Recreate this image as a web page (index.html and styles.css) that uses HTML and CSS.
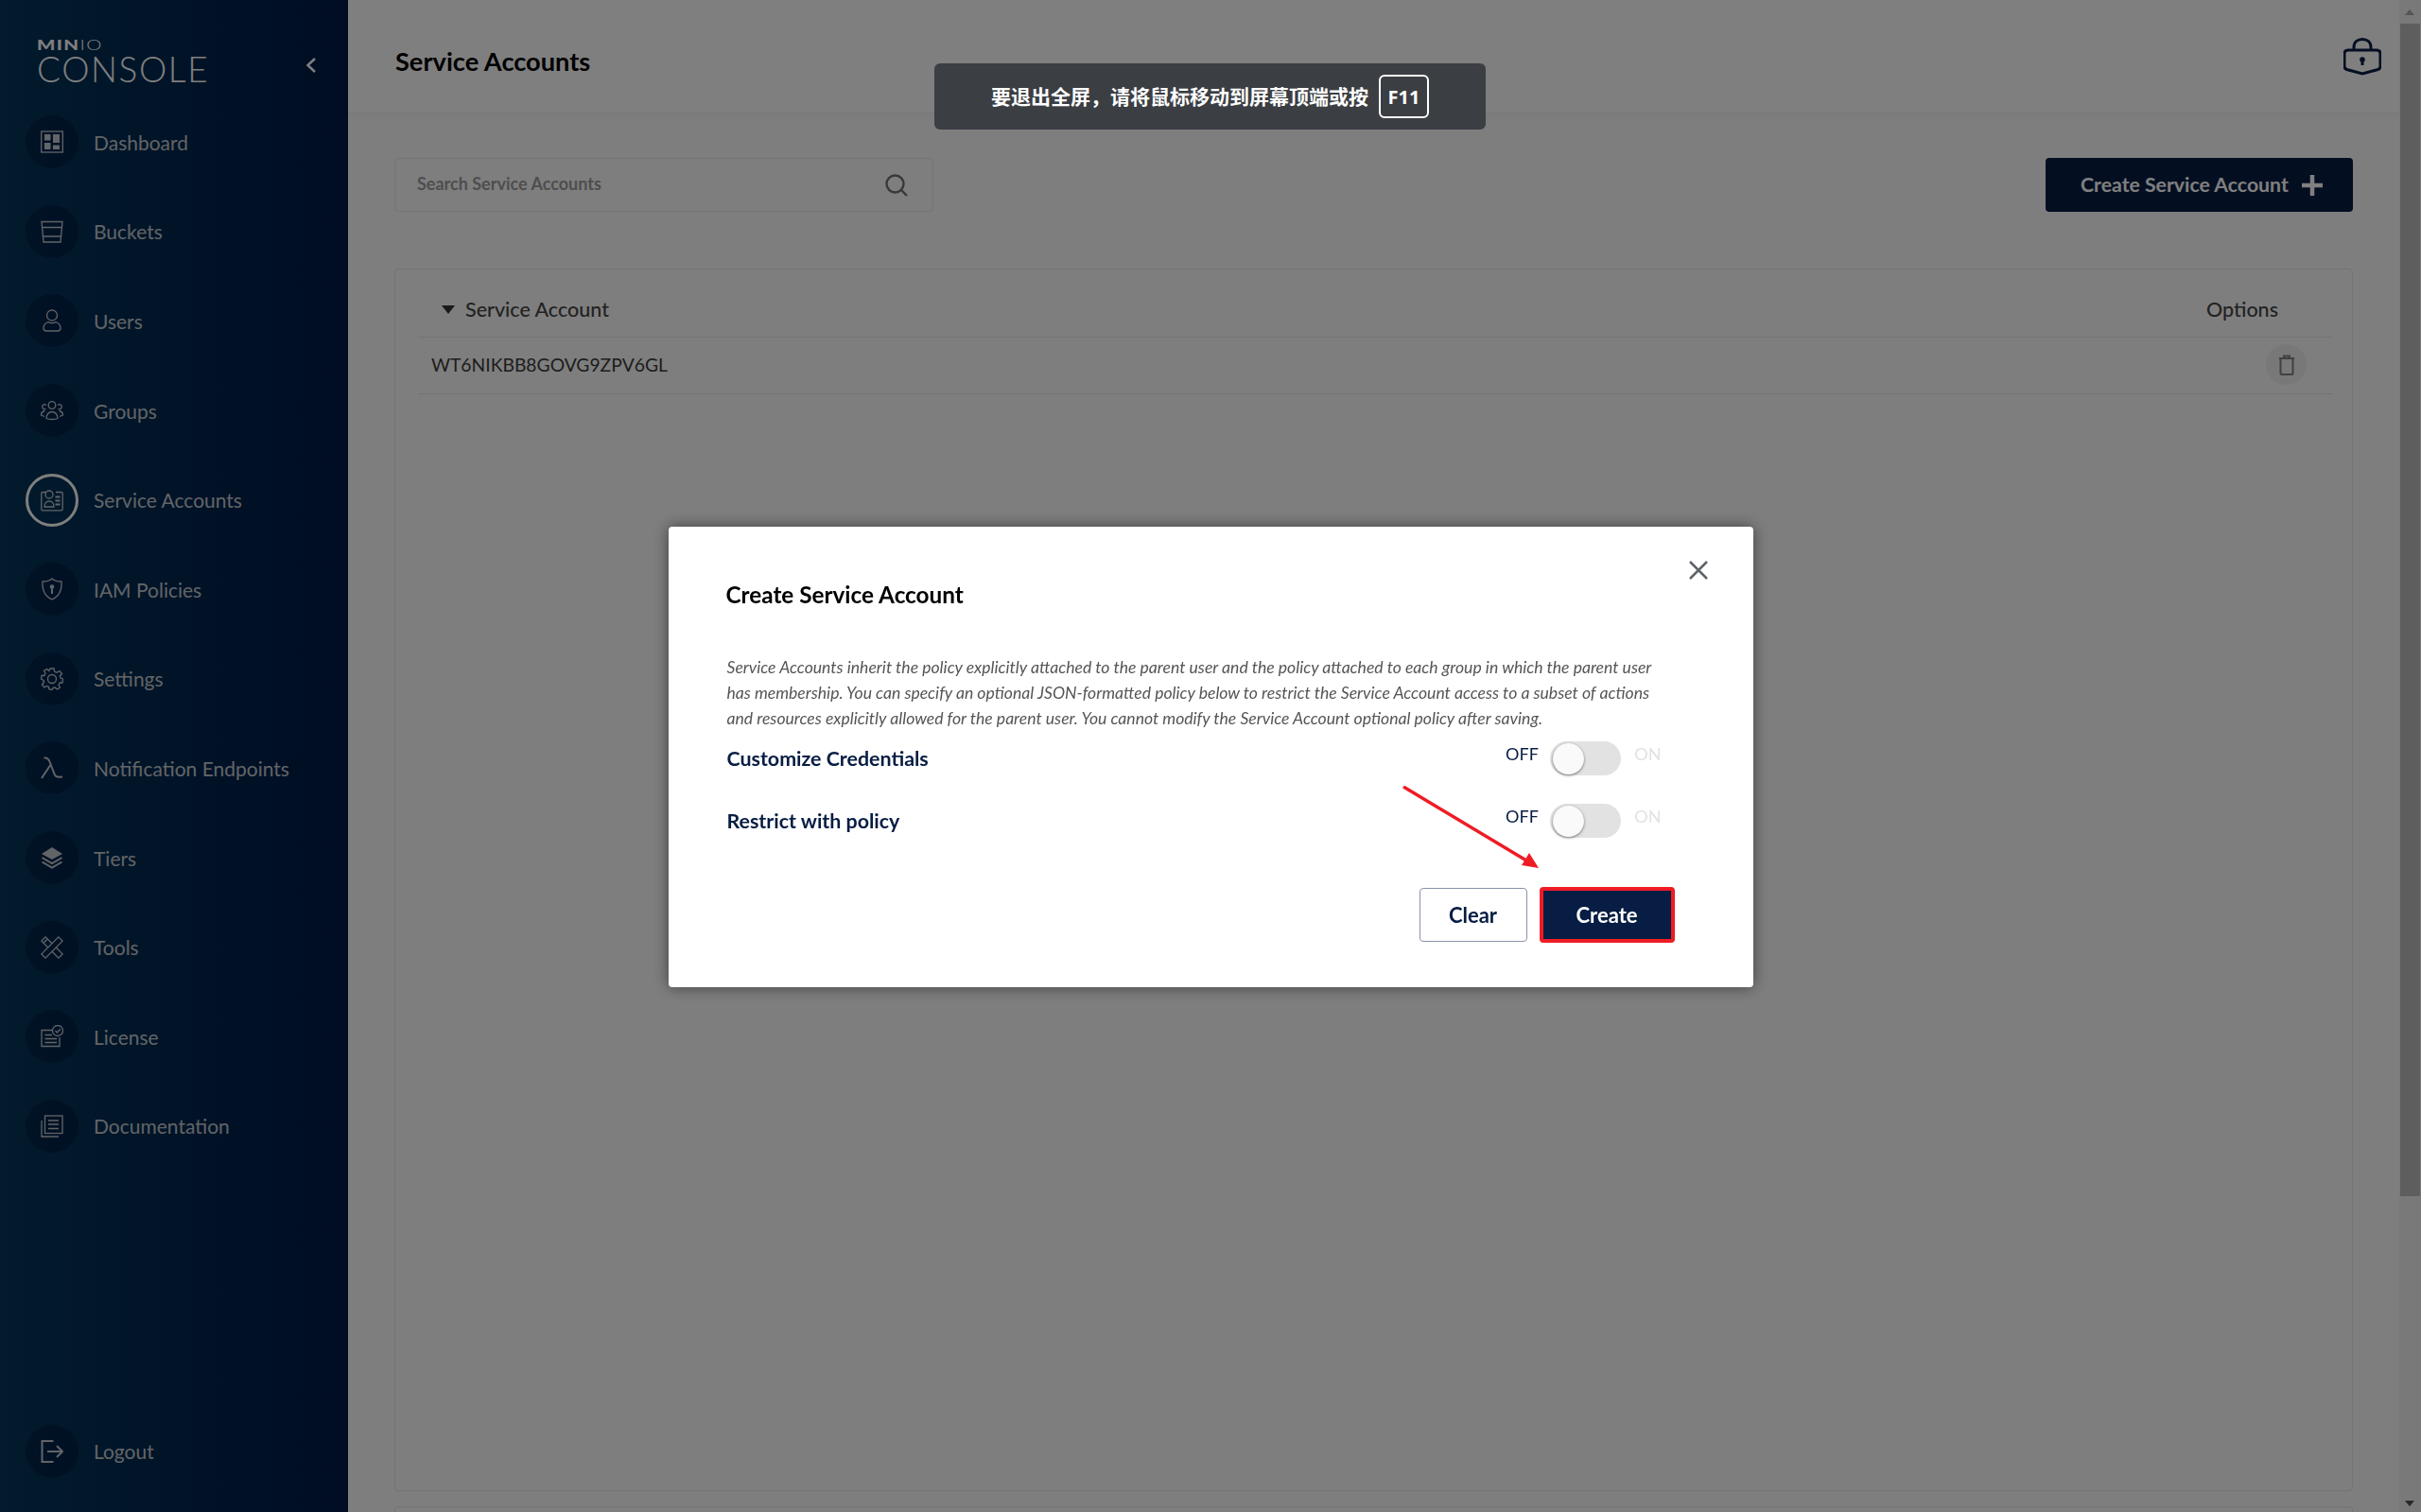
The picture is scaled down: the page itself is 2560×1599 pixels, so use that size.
FILE: index.html
```html
<!DOCTYPE html>
<html lang="en">
<head>
  <title>Service Accounts</title>
  <link rel="stylesheet" href="styles.css">
</head>
<body>
  <div class="app">
    <aside class="sidebar">
      <div class="brand">
        <div class="logo">
          <div class="logo-top"><b>MIN</b>IO</div>
          <div class="logo-name">CONSOLE</div>
        </div>
        <svg class="collapse" viewBox="0 0 14 18"><path d="M11 2 L3.500 9 L11 16"/></svg>
      </div>
      <nav class="nav">
        <a class="nav-item"><span class="nav-icon"><svg viewBox="0 0 24 24"><rect x="0.700" y="1" width="22.600" height="22"/><rect x="4" y="4" width="6.500" height="6.500" class="fill"/><rect x="13" y="4" width="7" height="9" class="fill"/><rect x="4" y="13" width="6.500" height="7" class="fill"/><rect x="13" y="15.500" width="7" height="4.500" class="fill"/></svg></span>Dashboard</a>
        <a class="nav-item"><span class="nav-icon"><svg viewBox="0 0 24 24"><path d="M1 1.500 H23 L21 23 H3 Z"/><path d="M1.600 7.500 H22.400 M2.500 17 H21.500"/></svg></span>Buckets</a>
        <a class="nav-item"><span class="nav-icon"><svg viewBox="0 0 24 24"><circle cx="12" cy="6.500" r="5.500"/><path d="M8 13.500 C4 15 3 17 3 20 C3 22 4 23 6 23 H18 C20 23 21 22 21 20 C21 17 20 15 16 13.500 C14 15 10 15 8 13.500 Z"/></svg></span>Users</a>
        <a class="nav-item"><span class="nav-icon"><svg viewBox="0 0 24 24"><circle cx="12" cy="6.500" r="3.800"/><path d="M6 6.500 C3.500 4.500 1 6.500 2 9 C2.500 10.500 4 11 5.500 10.500 M18 6.500 C20.500 4.500 23 6.500 22 9 C21.500 10.500 20 11 18.500 10.500"/><path d="M6 20.500 C6 16.500 8.500 13.500 12 13.500 C15.500 13.500 18 16.500 18 20.500 C15 21.800 9 21.800 6 20.500 Z"/><path d="M4.500 12.500 C1.500 13 0.500 15 0.500 17 L4 18.500 M19.500 12.500 C22.500 13 23.500 15 23.500 17 L20 18.500"/></svg></span>Groups</a>
        <a class="nav-item active"><span class="nav-icon"><svg viewBox="0 0 24 24"><path d="M6 3.500 H2 C1.200 3.500 0.800 4 0.800 4.800 V21.500 C0.800 22.300 1.200 22.800 2 22.800 H22 C22.800 22.800 23.200 22.300 23.200 21.500 V4.800 C23.200 4 22.800 3.500 22 3.500 H16"/><circle cx="9" cy="6" r="4"/><path d="M4 19 C4 15.500 6 13 9 13 C12 13 14 15.500 14 19 Z"/><path d="M15.500 8.500 H20.500 M15.500 12.500 H20.500 M15.500 16.500 H20.500" class="thick"/></svg></span>Service Accounts</a>
        <a class="nav-item"><span class="nav-icon"><svg viewBox="0 0 24 24"><path d="M12 1 C15 3.500 18.500 4 22 4 C22.500 13 20 19.500 12 23 C4 19.500 1.500 13 2 4 C5.500 4 9 3.500 12 1 Z"/><circle cx="12" cy="9.500" r="2.300" class="fill"/><path d="M12 11 V17" class="thick"/></svg></span>IAM Policies</a>
        <a class="nav-item"><span class="nav-icon"><svg viewBox="0 0 24 24"><circle cx="12" cy="12" r="4.500"/><path d="M10 1 H14 L14.700 4.300 L17 5.300 L19.900 3.500 L22.500 6.500 L20.300 9 L21 11 L23.500 12 L23 16 L20.300 16 L19 18.500 L20.500 21 L17.500 23 L15 21 L13 21.500 L12 23.500 L9 23 L8.500 20.500 L6.500 19.500 L3.800 21 L1.500 18 L3.500 15.500 L3 13.500 L0.500 12 L1 8.500 L3.700 8.500 L5 6 L3.500 3.500 L6.500 1.500 L9 3.500 Z"/></svg></span>Settings</a>
        <a class="nav-item"><span class="nav-icon"><svg viewBox="0 0 24 24"><path class="thick" d="M1 23 L11 8 M3.500 1.500 H5 C7.500 1.500 8.500 3 9.500 5.500 L14.500 18.500 C15.500 21.500 17 22 23 21.500"/></svg></span>Notification Endpoints</a>
        <a class="nav-item"><span class="nav-icon"><svg viewBox="0 0 24 24"><path class="fill" d="M12 1 L23 8 L12 14 L1 8 Z"/><path class="thick" d="M1.500 12 L12 18 L22.500 12 M1.500 16.500 L12 22.500 L22.500 16.500"/></svg></span>Tiers</a>
        <a class="nav-item"><span class="nav-icon"><svg viewBox="0 0 24 24"><path d="M18.900 0.900 L23.100 5.100 L5.100 23.100 L0.900 18.900 Z"/><path d="M7.800 12 L0.900 5.100 L5.100 0.900 L12 7.800 M12 16.200 L18.900 23.100 L23.100 18.900 L16.200 12"/><path d="M3 7.200 L7.200 3"/></svg></span>Tools</a>
        <a class="nav-item"><span class="nav-icon"><svg viewBox="0 0 24 24"><path d="M13 5.500 H1 V22.500 H20 V13"/><path d="M4.500 10.500 H12 M4.500 14.500 H17 M4.500 18.500 H17"/><circle cx="18" cy="6" r="5.500"/><path d="M15.500 6 L17.500 8 L20.800 4.300"/></svg></span>License</a>
        <a class="nav-item"><span class="nav-icon"><svg viewBox="0 0 24 24"><path d="M1 6 V23 H19"/><rect x="4.500" y="1" width="18.500" height="18.500"/><path d="M8 6 H19 M8 10 H19 M8 14.500 H19"/></svg></span>Documentation</a>
        <a class="nav-item logout"><span class="nav-icon"><svg viewBox="0 0 24 24"><path class="thick" d="M13.500 1 H1.500 V23 H13.500"/><path class="thick" d="M7 12 H23 M17 6 L23 12 L17 18"/></svg></span>Logout</a>
      </nav>
    </aside>

    <main class="main">
      <header class="topbar">
        <h1>Service Accounts</h1>
        <svg class="lock" viewBox="0 0 40 40"><path d="M5 13 H35 C37.500 13 39 14.500 39 17 V30 C39 32 38 33 36.500 33.500 L20 38 L3.500 33.500 C2 33 1 32 1 30 V17 C1 14.500 2.500 13 5 13 Z"/><path d="M11 13 V10 C11 4.500 15 1.500 20 1.500 C25 1.500 29 4.500 29 10 V13"/><circle cx="20" cy="23" r="2.800" class="fill"/><path d="M20 24 V29" class="thick"/></svg>
      </header>
      <div class="content">
        <div class="toolbar">
          <div class="search">
            <span>Search Service Accounts</span>
            <svg viewBox="0 0 24 24"><circle cx="10.500" cy="10.500" r="9"/><path d="M17 17 L23 23"/></svg>
          </div>
          <button class="btn-primary"><span>Create Service Account</span> <svg viewBox="0 0 24 24"><path d="M12 1 V23 M1 12 H23"/></svg></button>
        </div>
        <section class="panel">
          <div class="table-head">
            <span class="sort"></span>
            <span class="col-name">Service Account</span>
            <span class="col-options">Options</span>
          </div>
          <div class="table-row">
            <span class="account">WT6NIKBB8GOVG9ZPV6GL</span>
            <span class="trash"><svg viewBox="0 0 18 22"><path d="M1 4 H17 M6 4 V1.500 H12 V4"/><path d="M2.500 4 V20 C2.500 20.700 3 21 3.500 21 H14.500 C15 21 15.500 20.700 15.500 20 V4"/></svg></span>
          </div>
        </section>
        <section class="panel"></section>
      </div>
    </main>

    <div class="scrollbar">
      <span class="arrow up"></span>
      <div class="thumb"></div>
      <span class="arrow down"></span>
    </div>
  </div>

  <div class="backdrop">
    <div class="modal">
      <svg class="close" viewBox="0 0 20 20"><path d="M1 1 L19 19 M19 1 L1 19"/></svg>
      <h2>Create Service Account</h2>
      <p class="desc">Service Accounts inherit the policy explicitly attached to the parent user and the policy attached to each group in which the parent user has membership. You can specify an optional JSON-formatted policy below to restrict the Service Account access to a subset of actions and resources explicitly allowed for the parent user. You cannot modify the Service Account optional policy after saving.</p>
      <div class="option">
        <label>Customize Credentials</label>
        <div class="switch"><span class="off">OFF</span><span class="track"><span class="knob"></span></span><span class="on">ON</span></div>
      </div>
      <div class="option">
        <label>Restrict with policy</label>
        <div class="switch"><span class="off">OFF</span><span class="track"><span class="knob"></span></span><span class="on">ON</span></div>
      </div>
      <div class="actions">
        <button class="btn-clear">Clear</button>
        <button class="btn-create">Create</button>
      </div>
      <!-- red annotation arrow -->
      <svg class="annotation" viewBox="0 0 146 88"><path d="M1 1 L131 79"/><polygon points="144,87 126,84 134,71"/></svg>
    </div>
  </div>

  <div class="fullscreen-tip">
    <span>要退出全屏，请将鼠标移动到屏幕顶端或按</span>
    <kbd>F11</kbd>
  </div>
</body>
</html>
```

FILE: styles.css
```css
* {
  box-sizing: border-box;
}

html, body {
  margin: 0;
  height: 100%;
  overflow: hidden;
}

body {
  font-family: Lato, "Noto Sans CJK SC", sans-serif;
  background-color: #fcfcfc;
  color: #000;
}

.app {
  display: flex;
  height: 1599px;
}

/* Sidebar */
.sidebar {
  width: 368px;
  flex-shrink: 0;
  display: flex;
  flex-direction: column;
  color: #c4c9cf;
  background: linear-gradient(90deg, #05365a 0%, #022850 45%, #001a46 100%);
}

.brand {
  height: 103px;
  flex-shrink: 0;
  display: flex;
  justify-content: space-between;
  padding: 38px 32px 0 39px;
}

.logo {
  color: #fff;
}

.logo-top {
  font-size: 15px;
  line-height: 18px;
  font-weight: 300;
  letter-spacing: 1px;
  white-space: nowrap;
  transform: scaleX(1.36);
  transform-origin: left;
}

.logo-top b {
  font-weight: 900;
}

.logo-name {
  margin-top: 2px;
  font-size: 37px;
  line-height: 30px;
  font-weight: 300;
  letter-spacing: 1.600px;
}

.collapse {
  width: 14px;
  height: 18px;
  margin-top: 22px;
  fill: none;
  stroke: #fff;
  stroke-width: 2.500;
}

.nav {
  flex: 1;
  display: flex;
  flex-direction: column;
  padding-bottom: 17px;
}

.nav-item {
  height: 94.600px;
  flex-shrink: 0;
  display: flex;
  align-items: center;
  gap: 16px;
  padding-left: 27px;
  font-size: 21px;
}

.nav-icon {
  width: 56px;
  height: 56px;
  border-radius: 50%;
  display: flex;
  align-items: center;
  justify-content: center;
  background-color: rgba(0, 20, 60, 0.45);
}

.nav-icon svg {
  width: 24px;
  height: 24px;
  fill: none;
  stroke: #c4c9cf;
  stroke-width: 1.300;
}

.nav-icon svg .fill {
  fill: #c4c9cf;
  stroke: none;
}

.nav-icon svg .thick {
  stroke-width: 2;
}

.active .nav-icon {
  border: 3px solid #fff;
  background: none;
}

.logout {
  margin-top: auto;
}

/* Main area */
.main {
  flex: 1;
  min-width: 0;
  display: flex;
  flex-direction: column;
}

.topbar {
  height: 119px;
  flex-shrink: 0;
  display: flex;
  align-items: center;
  justify-content: space-between;
  padding: 0 19px 0 50px;
  background-color: #fff;
  box-shadow: 0 3px 6px rgba(0, 0, 0, 0.04);
}

.topbar h1 {
  margin: 0;
  padding-top: 10px;
  font-size: 27.200px;
  font-weight: 700;
  color: #000;
}

.lock {
  width: 40px;
  height: 40px;
  fill: none;
  stroke: #071d43;
  stroke-width: 3;
}

.lock .fill {
  fill: #071d43;
  stroke: none;
}

.content {
  flex: 1;
  min-height: 0;
  padding: 48px 49px 0;
  overflow: hidden;
}

.toolbar {
  display: flex;
  justify-content: space-between;
  height: 57px;
}

.search {
  width: 570px;
  display: flex;
  align-items: center;
  justify-content: space-between;
  padding: 0 26px 3px 23px;
  border: 1px solid #eaeaea;
  border-radius: 4px;
  font-size: 18px;
  font-weight: 700;
  color: #9c9c9c;
}

.search svg {
  width: 24px;
  height: 24px;
  margin-top: 3px;
  fill: none;
  stroke: #707070;
  stroke-width: 2.400;
}

.btn-primary {
  width: 325px;
  display: flex;
  align-items: center;
  gap: 13px;
  padding: 0 0 2px 37px;
  border: none;
  border-radius: 4px;
  background-color: #081c42;
  color: #fff;
  font-family: inherit;
  font-size: 21.250px;
  font-weight: 700;
}

.btn-primary svg {
  width: 24px;
  height: 24px;
  margin-top: 2px;
  fill: none;
  stroke: #fff;
  stroke-width: 4.500;
}

.panel {
  height: 1293px;
  margin-top: 60px;
  padding: 0 20px 0 24px;
  border: 1px solid #e6e6e6;
  border-radius: 4px;
}

.panel + .panel {
  margin-top: 16px;
}

.table-head {
  height: 72px;
  display: flex;
  align-items: center;
  padding-top: 13px;
  border-bottom: 1px solid #e6e6e6;
  font-size: 21.500px;
  font-weight: 500;
  color: #444;
}

.sort {
  width: 0;
  height: 0;
  margin-left: 25px;
  margin-right: 11px;
  border-left: 7px solid transparent;
  border-right: 7px solid transparent;
  border-top: 9px solid #333;
}

.col-options {
  margin-left: auto;
  margin-right: 58px;
}

.table-row {
  height: 60px;
  display: flex;
  align-items: center;
  justify-content: space-between;
  padding: 0 28px 2px 14px;
  border-bottom: 1px solid #e6e6e6;
  font-size: 19.300px;
  color: #3a3a3a;
}

.trash {
  width: 43px;
  height: 43px;
  border-radius: 50%;
  display: flex;
  align-items: center;
  justify-content: center;
  background-color: #f0f0f0;
}

.trash svg {
  width: 18px;
  height: 22px;
  fill: none;
  stroke: #808080;
  stroke-width: 2;
}

/* Scrollbar */
.scrollbar {
  width: 23px;
  flex-shrink: 0;
  position: relative;
  padding: 25px 1px 0 1px;
  background-color: #f2f2f2;
}

.thumb {
  height: 1240px;
  background-color: #bdbdbd;
}

.arrow {
  position: absolute;
  left: 6px;
  width: 0;
  height: 0;
  border-left: 5.500px solid transparent;
  border-right: 5.500px solid transparent;
}

.arrow.up {
  top: 10px;
  border-bottom: 6px solid #aaa;
}

.arrow.down {
  bottom: 6px;
  border-top: 6px solid #505050;
}

/* Dialog */
.backdrop {
  position: fixed;
  inset: 0;
  display: flex;
  align-items: center;
  justify-content: center;
  background-color: rgba(0, 0, 0, 0.5);
}

.modal {
  position: relative;
  width: 1147px;
  height: 487px;
  margin-top: 2px;
  padding: 50px 83px 0 61px;
  border-radius: 4px;
  background-color: #fff;
  box-shadow: 0 0 16px rgba(0, 0, 0, 0.5);
}

.modal h2 {
  margin: 0;
  font-size: 24.300px;
  line-height: 44px;
  font-weight: 700;
  color: #000;
}

.close {
  position: absolute;
  top: 36px;
  right: 48px;
  width: 20px;
  height: 20px;
  fill: none;
  stroke: #5f6368;
  stroke-width: 2.500;
}

.desc {
  margin: 41px 0 -4px;
  padding-left: 1px;
  font-size: 17.600px;
  line-height: 27px;
  font-style: italic;
  color: #555;
}

.option {
  height: 66px;
  display: flex;
  align-items: center;
  justify-content: space-between;
  padding: 0 14px 0 1px;
}

.option label {
  font-size: 21.400px;
  font-weight: 700;
  color: #071d43;
}

.switch {
  display: flex;
  align-items: center;
  font-size: 18px;
}

.off, .on {
  margin-bottom: 10px;
}

.off {
  color: #071d43;
}

.on {
  color: #e2e2e2;
}

.track {
  width: 75px;
  height: 36px;
  margin: 0 14.500px 0 12px;
  padding: 2px 3px;
  border-radius: 18px;
  background-color: #e2e2e2;
}

.knob {
  display: block;
  width: 33px;
  height: 33px;
  border-radius: 50%;
  background-color: #fafafa;
  box-shadow: 0 1px 3px rgba(0, 0, 0, 0.5);
}

.actions {
  display: flex;
  justify-content: flex-end;
  align-items: center;
  gap: 13px;
  margin-top: 37px;
}

.actions button {
  font-family: inherit;
  font-size: 22px;
  font-weight: 700;
  border-radius: 4px;
}

.btn-clear {
  width: 114px;
  height: 57px;
  border: 1px solid #8a93a8;
  background-color: #fff;
  color: #071d43;
}

.btn-create {
  width: 143px;
  height: 59px;
  border: 4px solid #ee1c25;
  background-color: #071d43;
  color: #fff;
}

.annotation {
  position: absolute;
  left: 776px;
  top: 274px;
  width: 146px;
  height: 88px;
  fill: #ee1c25;
  stroke: none;
}

.annotation path {
  fill: none;
  stroke: #ee1c25;
  stroke-width: 3.500;
}

/* Fullscreen hint */
.fullscreen-tip {
  position: fixed;
  left: 988px;
  top: 67px;
  width: 583px;
  height: 70px;
  display: flex;
  align-items: center;
  justify-content: center;
  gap: 11px;
  border-radius: 6px;
  background-color: #3b3e43;
  color: #fff;
  font-family: "Noto Sans CJK SC", sans-serif;
  font-size: 21px;
  font-weight: 700;
}

.fullscreen-tip span {
  margin-bottom: 2px;
}

.fullscreen-tip kbd {
  width: 53px;
  height: 46px;
  display: flex;
  align-items: center;
  justify-content: center;
  border: 2px solid #fff;
  border-radius: 6px;
  font-family: "Noto Sans", sans-serif;
  font-size: 20px;
  font-weight: 700;
}
```
